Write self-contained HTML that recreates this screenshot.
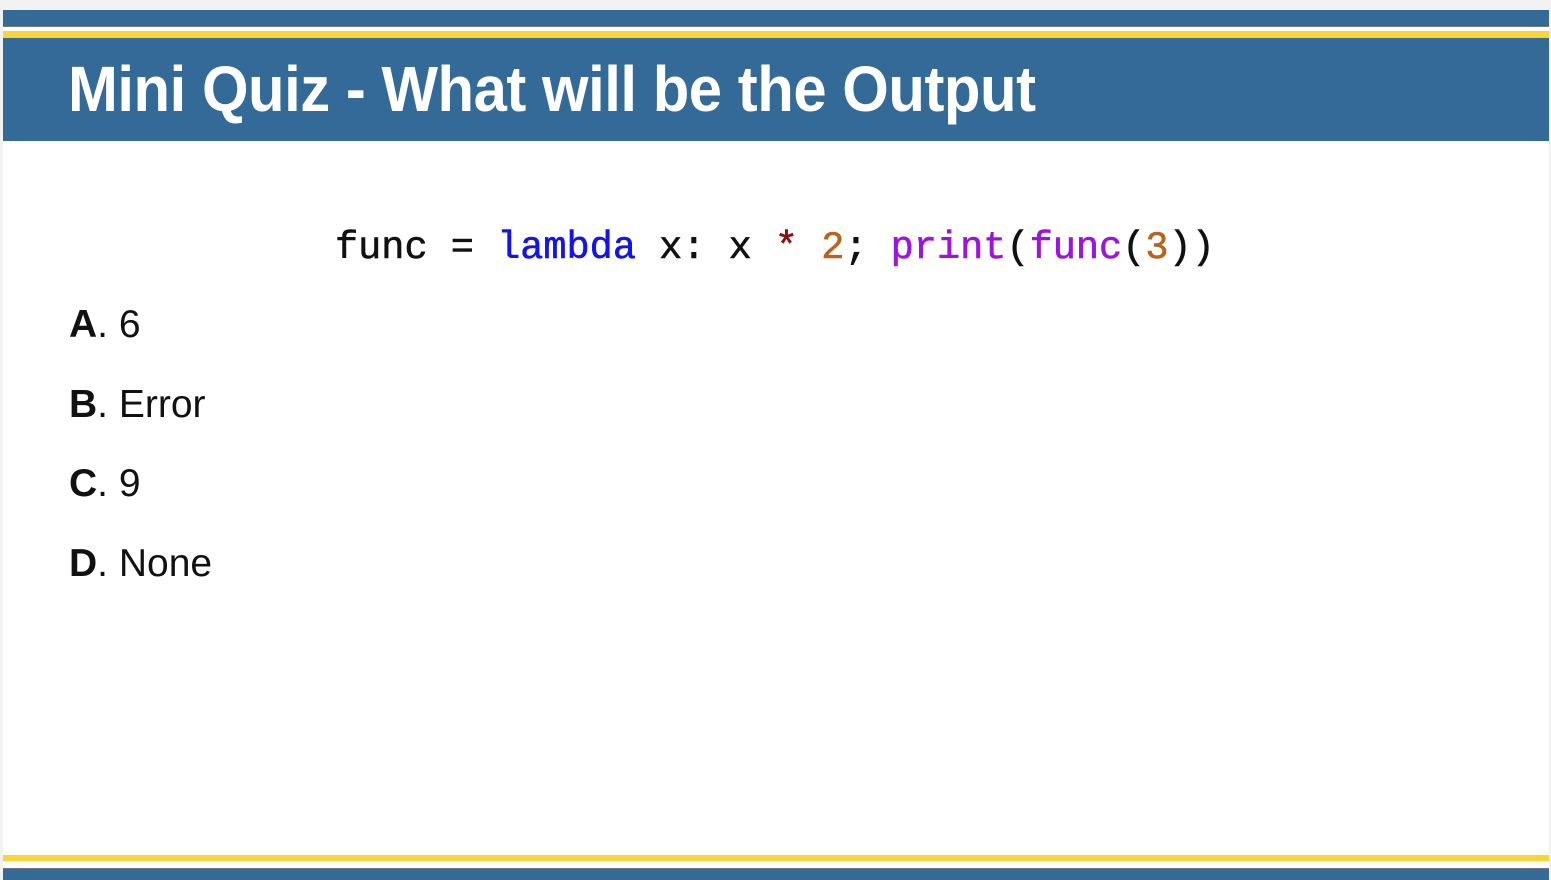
<!DOCTYPE html>
<html><head><meta charset="utf-8"><style>
html,body{margin:0;padding:0;}
body{width:1551px;height:880px;background:#f2f2f2;position:relative;overflow:hidden;font-family:"Liberation Sans",sans-serif;}
.slide{position:absolute;left:3px;top:10px;width:1546px;height:870px;background:#fff;}
.b{position:absolute;left:0;width:100%;}
.title{position:absolute;left:68px;top:52px;font-weight:bold;font-size:64px;color:#fff;white-space:nowrap;transform:scaleX(0.935);transform-origin:left top;letter-spacing:-0.5px;}
.code{position:absolute;left:335px;top:226px;font-family:"Liberation Mono",monospace;font-size:38.6px;color:#111;white-space:pre;-webkit-text-stroke:0.6px currentColor;}
.opt{position:absolute;left:69px;font-size:39px;color:#111;white-space:nowrap;}
.opt b{font-weight:bold;}
</style></head><body>
<div class="slide">
<div class="b" style="top:0;height:16px;background:#336a98"></div>
<div class="b" style="top:16px;height:1px;background:#777"></div>
<div class="b" style="top:21px;height:7px;background:#fdd33a"></div>
<div class="b" style="top:28px;height:103px;background:#336a98"></div>
<div class="b" style="top:845px;height:6px;background:#fdd33a"></div>
<div class="b" style="top:858px;height:1px;background:#777"></div>
<div class="b" style="top:859px;height:11px;background:#336a98"></div>
</div>
<div class="title">Mini Quiz - What will be the Output</div>
<div class="code">func = <span style="color:#1414e6">lambda</span> x: x <span style="color:#8b1010">*</span> <span style="color:#b5651d">2</span>; <span style="color:#9b14e0">print</span>(<span style="color:#9b14e0">func</span>(<span style="color:#b5651d">3</span>))</div>
<div class="opt" style="top:303px"><b>A</b>. 6</div>
<div class="opt" style="top:383px"><b>B</b>. Error</div>
<div class="opt" style="top:462px"><b>C</b>. 9</div>
<div class="opt" style="top:542px"><b>D</b>. None</div>
</body></html>
